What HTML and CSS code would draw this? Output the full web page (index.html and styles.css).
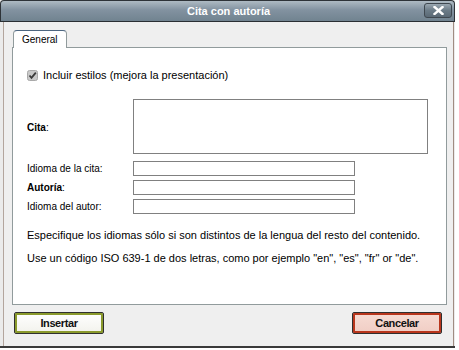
FILE: index.html
```html
<!DOCTYPE html>
<html lang="es">
<head>
<meta charset="utf-8">
<title>Cita con autoría</title>
<link rel="stylesheet" href="styles.css">
</head>
<body>
<div class="window">
  <div class="titlebar">
    <span class="title">Cita con autoría</span>
    <span class="close">
      <svg width="11" height="9" viewBox="0 0 11 9"><path d="M1.5 1 L9.5 8 M9.5 1 L1.5 8" stroke="#fff" stroke-width="2.4" stroke-linecap="square"/></svg>
    </span>
  </div>
  <div class="content">
    <div class="tabs"><span class="tab">General</span></div>
    <div class="panel">
      <div class="check-row">
        <span class="checkbox">
          <svg width="11" height="11" viewBox="0 0 11 11"><rect x="0.5" y="0.5" width="10" height="10" rx="2" fill="#c9c9c9" stroke="#a9a9a9"/><path d="M2.5 5.5 L4.5 7.8 L8.8 2.6" fill="none" stroke="#3a3a3a" stroke-width="1.8"/></svg>
        </span>
        <span>Incluir estilos (mejora la presentación)</span>
      </div>
      <div class="form">
        <label class="lbl"><b>Cita</b>:</label>
        <div class="area"></div>
        <label class="lbl">Idioma de la cita:</label>
        <div class="field"></div>
        <label class="lbl"><b>Autoría</b>:</label>
        <div class="field"></div>
        <label class="lbl">Idioma del autor:</label>
        <div class="field"></div>
      </div>
      <p class="note">Especifique los idiomas sólo si son distintos de la lengua del resto del contenido.</p>
      <p class="note">Use un código ISO 639-1 de dos letras, como por ejemplo "en", "es", "fr" or "de".</p>
    </div>
    <div class="buttons">
      <span class="btn btn-ok">Insertar</span>
      <span class="btn btn-cancel">Cancelar</span>
    </div>
  </div>
</div>
</body>
</html>
```

FILE: styles.css
```css
html, body {
  margin: 0;
  padding: 0;
  background: #ffffff;
}
body {
  font-family: "Liberation Sans", Arial, sans-serif;
  font-size: 11px;
  color: #000;
}
.window {
  width: 455px;
  height: 348px;
  box-sizing: border-box;
  background: #ebebeb;
  border-bottom: 2px solid #3a3a3a;
  display: flex;
  flex-direction: column;
}
.titlebar {
  height: 22px;
  box-sizing: border-box;
  border: 1px solid #2e3338;
  border-bottom: 1px solid #2a2f33;
  border-radius: 4px 4px 0 0;
  background: linear-gradient(#aebac3, #8292a0 45%, #718390);
  display: flex;
  align-items: center;
  justify-content: center;
  position: relative;
  flex: none;
}
.title {
  color: #fff;
  font-weight: bold;
  font-size: 11px;
  margin-left: 2px;
}
.close {
  position: absolute;
  right: 2px;
  top: 2px;
  width: 28px;
  height: 15px;
  box-sizing: border-box;
  border: 1px solid #3f4850;
  border-radius: 3px;
  background: linear-gradient(#9aa7b1, #6b7b87 50%, #5a6975);
  display: flex;
  align-items: center;
  justify-content: center;
}
.content {
  flex: 1;
  margin-left: 3px;
  margin-right: 1px;
  border-left: 1px solid #b3a59d;
  border-right: 1px solid #a08c82;
  background: #efefef;
  padding: 8px 6px 0 8px;
  display: flex;
  flex-direction: column;
}
.tabs {
  display: flex;
  height: 17px;
  padding-left: 1px;
}
.tab {
  width: 54px;
  height: 18px;
  box-sizing: border-box;
  background: #fff;
  border: 1px solid #919b9c;
  border-top: 1px solid #4d6680;
  border-bottom: none;
  border-radius: 4px 4px 0 0;
  padding: 3px 0 0 8px;
  font-size: 10px;
  position: relative;
  z-index: 1;
}
.panel {
  height: 258px;
  box-sizing: border-box;
  border: 1px solid #919b9c;
  background: #fff;
  padding: 20px 14px 0 14px;
}
.check-row {
  display: flex;
  align-items: center;
  gap: 5px;
  height: 14px;
  font-size: 11px;
}
.checkbox {
  display: flex;
  width: 11px;
  height: 11px;
}
.form {
  margin-top: 17px;
  display: grid;
  grid-template-columns: 106px auto;
  grid-template-rows: 58px 15px 15px 15px;
  row-gap: 4px;
  align-items: center;
}
.form .area {
  width: 295px;
  height: 55px;
  box-sizing: border-box;
  border: 1px solid #808080;
  align-self: start;
}
.form .field {
  width: 222px;
  height: 15px;
  box-sizing: border-box;
  border: 1px solid #808080;
}
.lbl {
  font-size: 10px;
}
.lbl:first-child {
  align-self: start;
  margin-top: 23px;
}
.note {
  margin: 15px 0 0 0;
  font-size: 11px;
  line-height: 13px;
}
.note + .note {
  margin-top: 10px;
}
.buttons {
  display: flex;
  justify-content: space-between;
  margin-top: 7px;
  padding: 0 5px 0 2px;
}
.btn {
  width: 90px;
  height: 22px;
  box-sizing: border-box;
  border: 1px solid #2f2f2f;
  border-radius: 2px;
  display: flex;
  align-items: center;
  justify-content: center;
  font-weight: bold;
  font-size: 11px;
  letter-spacing: -0.4px;
  color: #111;
}
.btn-ok {
  box-shadow: inset 0 0 0 2px #8a9a2c;
  background: linear-gradient(#ffffff, #f2f2ec);
}
.btn-cancel {
  box-shadow: inset 0 0 0 2px #b9361c;
  background: linear-gradient(#f7dcd4, #f0cdc4);
}
```
